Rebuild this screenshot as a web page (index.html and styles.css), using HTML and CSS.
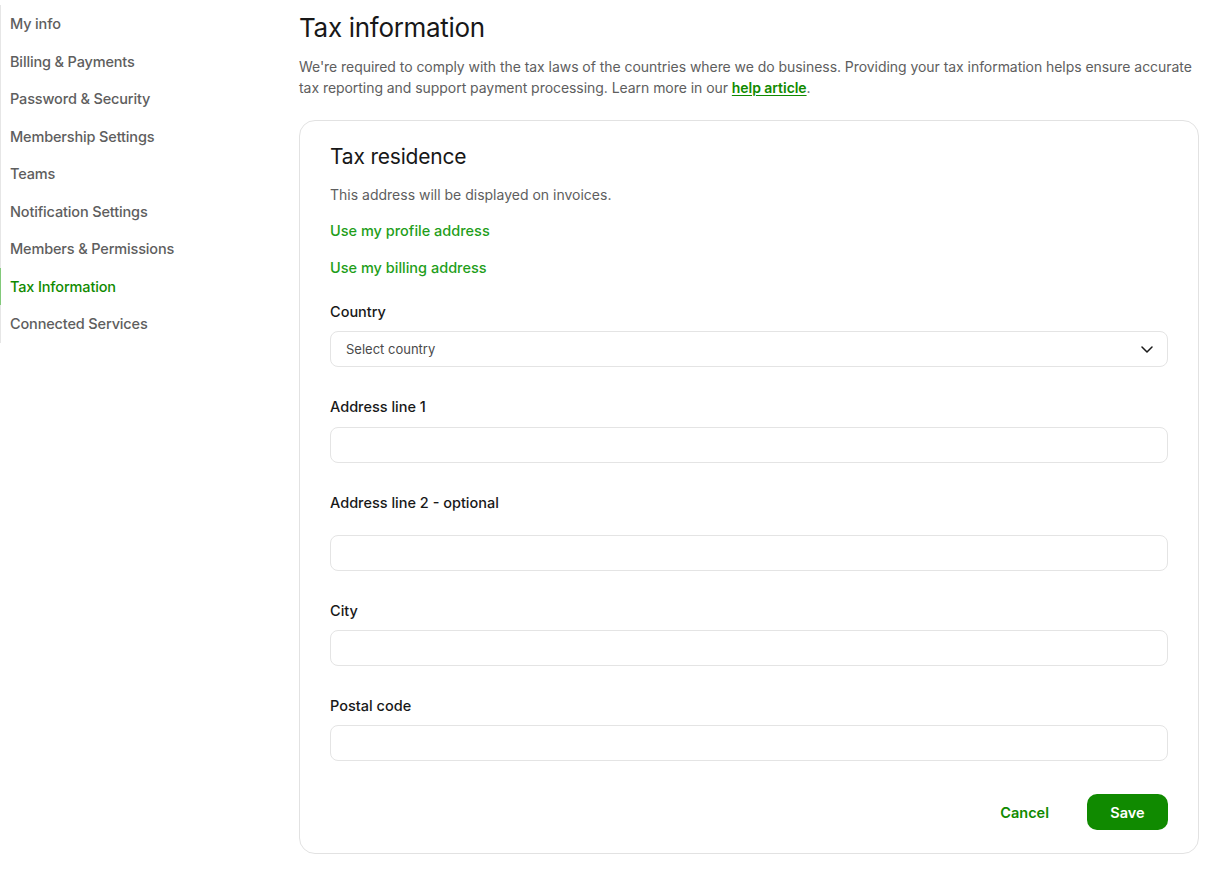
FILE: index.html
```html
<!DOCTYPE html>
<html lang="en">
<head>
<meta charset="utf-8">
<title>Tax information</title>
<link rel="stylesheet" href="styles.css">
</head>
<body>
<div class="layout">
  <nav class="sidebar">
    <a class="nav-item" href="#">My info</a>
    <a class="nav-item" href="#">Billing &amp; Payments</a>
    <a class="nav-item" href="#">Password &amp; Security</a>
    <a class="nav-item" href="#">Membership Settings</a>
    <a class="nav-item" href="#">Teams</a>
    <a class="nav-item" href="#">Notification Settings</a>
    <a class="nav-item" href="#">Members &amp; Permissions</a>
    <a class="nav-item active" href="#">Tax Information</a>
    <a class="nav-item" href="#">Connected Services</a>
  </nav>
  <main class="main">
    <h1 class="page-title">Tax information</h1>
    <p class="intro">We're required to comply with the tax laws of the countries where we do business. Providing your tax information helps ensure accurate tax reporting and support payment processing. Learn more in our <a href="#" class="help-link">help article</a>.</p>
    <section class="card">
      <h2 class="card-title">Tax residence</h2>
      <p class="card-desc">This address will be displayed on invoices.</p>
      <a href="#" class="action-link first">Use my profile address</a>
      <a href="#" class="action-link">Use my billing address</a>

      <div class="field field-country">
        <label class="label">Country</label>
        <div class="select">
          <span class="select-text">Select country</span>
          <svg class="chevron" width="12" height="7" viewBox="0 0 12 7" fill="none"><path d="M1 1l5 5 5-5" stroke="#1a1a1a" stroke-width="1.5" stroke-linecap="round" stroke-linejoin="round"/></svg>
        </div>
      </div>

      <div class="field">
        <label class="label">Address line 1</label>
        <div class="input gap-10"></div>
      </div>

      <div class="field">
        <label class="label">Address line 2 - optional</label>
        <div class="input gap-22"></div>
      </div>

      <div class="field">
        <label class="label">City</label>
        <div class="input"></div>
      </div>

      <div class="field">
        <label class="label">Postal code</label>
        <div class="input"></div>
      </div>

      <div class="actions">
        <button class="btn btn-cancel">Cancel</button>
        <button class="btn btn-save">Save</button>
      </div>
    </section>
  </main>
</div>
</body>
</html>
```

FILE: styles.css
```css
* { box-sizing: border-box; }

html, body {
  margin: 0;
  padding: 0;
  background: #ffffff;
  font-family: Inter, "Noto Sans", "Liberation Sans", sans-serif;
  color: #181818;
}

.layout {
  display: flex;
  align-items: flex-start;
}

.sidebar {
  width: 299px;
  flex-shrink: 0;
  display: flex;
  flex-direction: column;
  padding-top: 5px;
}

.nav-item {
  display: block;
  padding: 8px 0 8px 9px;
  line-height: 21.5px;
  font-size: 14.5px;
  font-weight: 500;
  color: #5e5e5e;
  text-decoration: none;
  border-left: 1px solid #e6e6e6;
  letter-spacing: -0.15px;
}

.nav-item.active {
  color: #108a00;
  border-left: 1px solid #82c97a;
}

.main {
  width: 900px;
  padding-top: 10px;
}

.page-title {
  margin: 0;
  font-size: 26px;
  line-height: 36px;
  font-weight: 400;
  color: #181818;
  letter-spacing: -0.3px;
}

.intro {
  margin: 9.5px 0 0;
  font-size: 14px;
  line-height: 21px;
  color: #5e5e5e;
  letter-spacing: -0.05px;
}

.help-link {
  color: #108a00;
  font-weight: 600;
  text-decoration: underline;
  text-underline-offset: 2px;
}

.card {
  margin-top: 22.5px;
  border: 1px solid #e2e2e2;
  border-radius: 16px;
  padding: 22px 30px 23px;
  display: flex;
  flex-direction: column;
}

.card-title {
  margin: 0;
  font-size: 21px;
  line-height: 28px;
  font-weight: 400;
  color: #181818;
  letter-spacing: -0.2px;
}

.card-desc {
  margin: 14px 0 0;
  font-size: 14px;
  line-height: 20px;
  color: #5e5e5e;
}

.action-link {
  display: block;
  align-self: flex-start;
  font-size: 14.5px;
  line-height: 20px;
  font-weight: 500;
  color: #1f9e1a;
  text-decoration: none;
  margin-top: 17px;
}

.action-link.first { margin-top: 16px; }

.field {
  display: flex;
  flex-direction: column;
  margin-top: 30px;
}

.field-country { margin-top: 24px; }

.label {
  font-size: 14.5px;
  line-height: 20px;
  font-weight: 500;
  color: #181818;
}

.select,
.input {
  margin-top: 9px;
  height: 36px;
  border: 1px solid #e4e4e4;
  border-radius: 8px;
  background: #ffffff;
}

.input.gap-10 { margin-top: 10px; }
.input.gap-22 { margin-top: 22px; }

.select {
  display: flex;
  align-items: center;
  justify-content: space-between;
  padding: 0 14px 0 15px;
}

.select-text {
  font-size: 13px;
  color: #4a4a4a;
}

.chevron { display: block; }

.actions {
  display: flex;
  justify-content: flex-end;
  align-items: center;
  gap: 16px;
  margin-top: 33px;
}

.btn {
  font-family: inherit;
  font-size: 14.5px;
  font-weight: 600;
  height: 36px;
  border-radius: 10px;
  border: none;
  cursor: pointer;
}

.btn-cancel {
  background: transparent;
  color: #108a00;
  padding: 0 22px;
}

.btn-save {
  background: #108a00;
  color: #ffffff;
  width: 81px;
  padding: 0;
}
```
